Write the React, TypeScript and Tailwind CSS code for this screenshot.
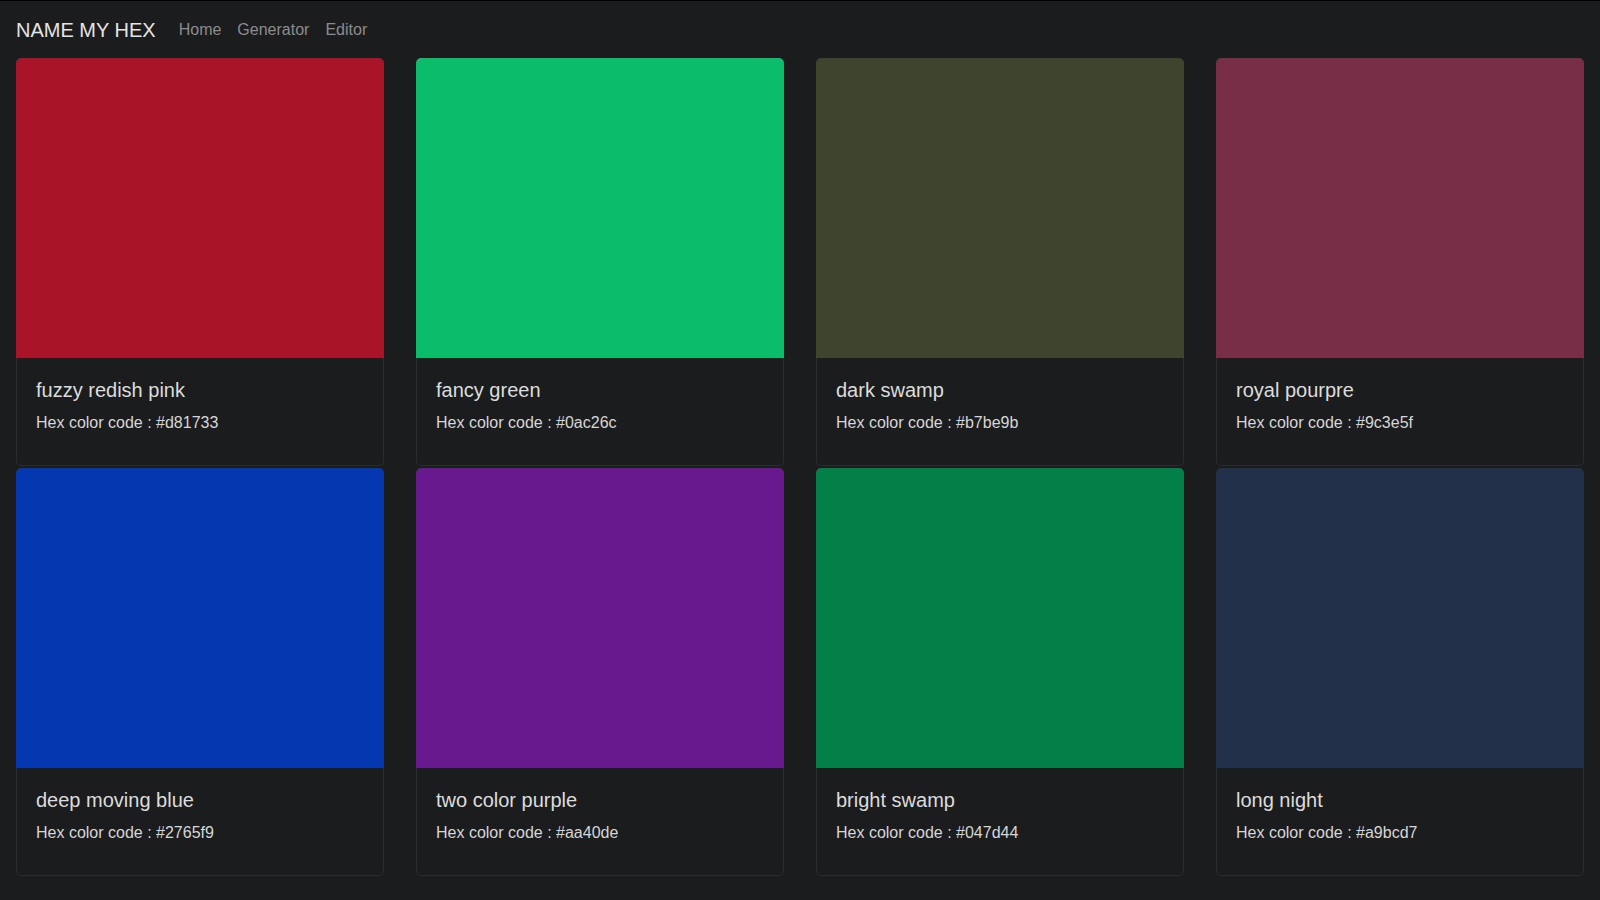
import React from "react";

const colors = [
  { name: "fuzzy redish pink", hex: "#d81733", swatch: "bg-[#aa1428]" },
  { name: "fancy green", hex: "#0ac26c", swatch: "bg-[#0bbc6a]" },
  { name: "dark swamp", hex: "#b7be9b", swatch: "bg-[#3f442f]" },
  { name: "royal pourpre", hex: "#9c3e5f", swatch: "bg-[#772e46]" },
  { name: "deep moving blue", hex: "#2765f9", swatch: "bg-[#0437b0]" },
  { name: "two color purple", hex: "#aa40de", swatch: "bg-[#68198d]" },
  { name: "bright swamp", hex: "#047d44", swatch: "bg-[#028048]" },
  { name: "long night", hex: "#a9bcd7", swatch: "bg-[#223049]" },
];

export default function App() {
  return (
    <div
      className="min-h-[900px] bg-[#1b1c1e] border-t border-black"
      style={{ fontFamily: '"Liberation Sans", Arial, sans-serif' }}
    >
      <nav className="h-[57px] flex items-center px-4">
        <span className="text-[20px] leading-[30px] text-[#e4e4e4] mr-[15px]">NAME MY HEX</span>
        <a className="text-[16px] leading-[24px] text-[#8c8c8c] px-[8px]">Home</a>
        <a className="text-[16px] leading-[24px] text-[#8c8c8c] px-[8px]">Generator</a>
        <a className="text-[16px] leading-[24px] text-[#8c8c8c] px-[8px]">Editor</a>
      </nav>
      <div className="grid grid-cols-4 gap-x-8 gap-y-[2px] px-4">
        {colors.map((c) => (
          <div key={c.name} className="rounded-[5px] bg-[#1b1c1e]">
            <div className={`${c.swatch} h-[300px] rounded-t-[5px]`} />
            <div className="pt-[20px] pb-[30px] px-[19px] border-x border-b border-[#2a2c2f] rounded-b-[5px]">
              <div className="text-[20px] leading-[24px] text-[#dcdcdc]">{c.name}</div>
              <div className="mt-[9px] text-[16px] leading-[24px] text-[#d6d6d6]">
                Hex color code : {c.hex}
              </div>
            </div>
          </div>
        ))}
      </div>
    </div>
  );
}
